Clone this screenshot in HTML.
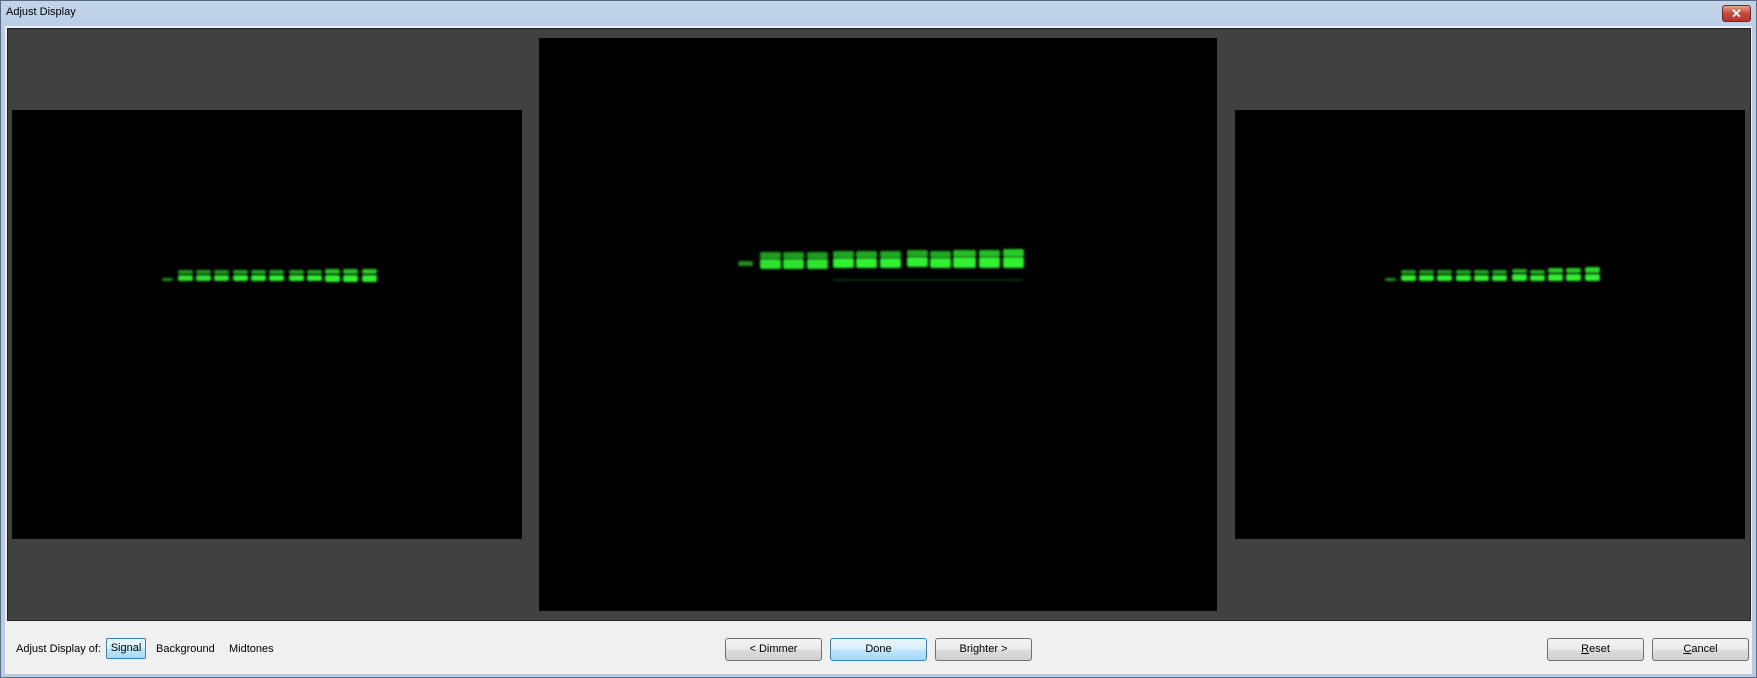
<!DOCTYPE html>
<html><head><meta charset="utf-8"><style>
*{margin:0;padding:0;box-sizing:border-box}
body{width:1757px;height:678px;overflow:hidden;background:#f0f0f0;font-family:"Liberation Sans",sans-serif;position:relative}
.win{position:absolute;left:0;top:0;width:1757px;height:678px;border:1px solid #5a6b80;background:linear-gradient(#c2d4ea,#b8cde5 30px,#b8cde5);}
.title{position:absolute;left:6px;top:6px;font-size:11px;color:#000}
.close{position:absolute;left:1722px;top:5px;width:29px;height:17px;border:1px solid #6d2a22;border-radius:3px;background:linear-gradient(#e7a08f,#c9473a 50%,#b5342a);color:#fff;font-size:13px;font-weight:bold;text-align:center;line-height:15px}
.client{position:absolute;left:5px;top:26px;width:1747px;height:648px;background:#f0f0f0}
.dark{position:absolute;left:7px;top:28px;width:1744px;height:593px;background:#414141;border:1px solid #222}
.img{position:absolute;background:#000;overflow:hidden}
.b{position:absolute;background:#30f030;filter:blur(1px);border-radius:2px}
.lbl{position:absolute;font-size:11px;color:#000;top:643px}
.btn{position:absolute;top:638px;height:23px;border:1px solid #707070;border-radius:3px;background:linear-gradient(#f2f2f2,#ebebeb 50%,#dddddd 50%,#cfcfcf);font-size:11px;text-align:center;line-height:21px;color:#000}
.btn.on{border-color:#3c7fb1;background:linear-gradient(#eaf6fd,#d9f0fc 50%,#bee6fd 50%,#a7d9f5)}
</style></head><body>
<div class="win"></div>
<div class="title">Adjust Display</div>
<div class="close">✕</div>
<div class="client"></div>
<div class="dark"></div>

<div class="img" style="left:12px;top:110px;width:510px;height:429px"></div>
<div class="img" style="left:539px;top:38px;width:678px;height:573px"></div>
<div class="img" style="left:1235px;top:110px;width:510px;height:429px"></div>

<!-- left bands -->
<div class="b" style="left:162px;top:278px;width:11px;height:3px;opacity:.6"></div>
<div class="b" style="left:178px;top:270px;width:15px;height:4px;opacity:.65"></div><div class="b" style="left:178px;top:275px;width:15px;height:6px;opacity:.95"></div>
<div class="b" style="left:196px;top:270px;width:15px;height:4px;opacity:.65"></div><div class="b" style="left:196px;top:275px;width:15px;height:6px;opacity:.95"></div>
<div class="b" style="left:214px;top:270px;width:15px;height:4px;opacity:.65"></div><div class="b" style="left:214px;top:275px;width:15px;height:6px;opacity:.95"></div>
<div class="b" style="left:233px;top:270px;width:15px;height:4px;opacity:.7"></div><div class="b" style="left:233px;top:275px;width:15px;height:6px;opacity:1"></div>
<div class="b" style="left:251px;top:270px;width:15px;height:4px;opacity:.7"></div><div class="b" style="left:251px;top:275px;width:15px;height:6px;opacity:1"></div>
<div class="b" style="left:269px;top:270px;width:15px;height:4px;opacity:.7"></div><div class="b" style="left:269px;top:275px;width:15px;height:6px;opacity:1"></div>
<div class="b" style="left:289px;top:270px;width:15px;height:4px;opacity:.7"></div><div class="b" style="left:289px;top:275px;width:15px;height:6px;opacity:1"></div>
<div class="b" style="left:307px;top:270px;width:15px;height:4px;opacity:.7"></div><div class="b" style="left:307px;top:275px;width:15px;height:6px;opacity:1"></div>
<div class="b" style="left:325px;top:269px;width:15px;height:5px;opacity:.8"></div><div class="b" style="left:325px;top:275px;width:15px;height:7px;opacity:1"></div>
<div class="b" style="left:343px;top:269px;width:15px;height:5px;opacity:.8"></div><div class="b" style="left:343px;top:275px;width:15px;height:7px;opacity:1"></div>
<div class="b" style="left:362px;top:269px;width:15px;height:5px;opacity:.85"></div><div class="b" style="left:362px;top:275px;width:15px;height:7px;opacity:1"></div>

<!-- center bands -->
<div class="b" style="left:738px;top:261px;width:15px;height:5px;opacity:.6"></div>
<div class="b" style="left:760px;top:252px;width:21px;height:7px;opacity:.65"></div><div class="b" style="left:760px;top:259px;width:21px;height:10px;opacity:.95"></div>
<div class="b" style="left:783px;top:252px;width:21px;height:7px;opacity:.65"></div><div class="b" style="left:783px;top:259px;width:21px;height:10px;opacity:.95"></div>
<div class="b" style="left:807px;top:252px;width:21px;height:7px;opacity:.65"></div><div class="b" style="left:807px;top:259px;width:21px;height:10px;opacity:.95"></div>
<div class="b" style="left:833px;top:251px;width:21px;height:7px;opacity:.7"></div><div class="b" style="left:833px;top:258px;width:21px;height:10px;opacity:1"></div>
<div class="b" style="left:856px;top:251px;width:21px;height:7px;opacity:.7"></div><div class="b" style="left:856px;top:258px;width:21px;height:10px;opacity:1"></div>
<div class="b" style="left:880px;top:251px;width:21px;height:7px;opacity:.7"></div><div class="b" style="left:880px;top:258px;width:21px;height:10px;opacity:1"></div>
<div class="b" style="left:907px;top:250px;width:21px;height:7px;opacity:.7"></div><div class="b" style="left:907px;top:257px;width:21px;height:10px;opacity:1"></div>
<div class="b" style="left:930px;top:251px;width:21px;height:7px;opacity:.7"></div><div class="b" style="left:930px;top:258px;width:21px;height:10px;opacity:1"></div>
<div class="b" style="left:953px;top:250px;width:23px;height:7px;opacity:.8"></div><div class="b" style="left:953px;top:257px;width:23px;height:11px;opacity:1"></div>
<div class="b" style="left:979px;top:250px;width:21px;height:7px;opacity:.8"></div><div class="b" style="left:979px;top:257px;width:21px;height:11px;opacity:1"></div>
<div class="b" style="left:1003px;top:249px;width:21px;height:8px;opacity:.85"></div><div class="b" style="left:1003px;top:257px;width:21px;height:11px;opacity:1"></div>
<div class="b" style="left:833px;top:279px;width:190px;height:2px;opacity:.2"></div>

<!-- right bands -->
<div class="b" style="left:1385px;top:278px;width:11px;height:3px;opacity:.6"></div>
<div class="b" style="left:1401px;top:270px;width:15px;height:4px;opacity:.65"></div><div class="b" style="left:1401px;top:275px;width:15px;height:6px;opacity:1"></div>
<div class="b" style="left:1419px;top:270px;width:15px;height:4px;opacity:.65"></div><div class="b" style="left:1419px;top:275px;width:15px;height:6px;opacity:1"></div>
<div class="b" style="left:1437px;top:270px;width:15px;height:4px;opacity:.65"></div><div class="b" style="left:1437px;top:275px;width:15px;height:6px;opacity:1"></div>
<div class="b" style="left:1456px;top:270px;width:15px;height:4px;opacity:.7"></div><div class="b" style="left:1456px;top:275px;width:15px;height:6px;opacity:1"></div>
<div class="b" style="left:1474px;top:270px;width:15px;height:4px;opacity:.7"></div><div class="b" style="left:1474px;top:275px;width:15px;height:6px;opacity:1"></div>
<div class="b" style="left:1492px;top:270px;width:15px;height:4px;opacity:.7"></div><div class="b" style="left:1492px;top:275px;width:15px;height:6px;opacity:1"></div>
<div class="b" style="left:1512px;top:269px;width:15px;height:4px;opacity:.75"></div><div class="b" style="left:1512px;top:274px;width:15px;height:7px;opacity:1"></div>
<div class="b" style="left:1530px;top:270px;width:15px;height:4px;opacity:.75"></div><div class="b" style="left:1530px;top:275px;width:15px;height:6px;opacity:1"></div>
<div class="b" style="left:1548px;top:268px;width:15px;height:5px;opacity:.85"></div><div class="b" style="left:1548px;top:274px;width:15px;height:7px;opacity:1"></div>
<div class="b" style="left:1566px;top:268px;width:15px;height:5px;opacity:.85"></div><div class="b" style="left:1566px;top:274px;width:15px;height:7px;opacity:1"></div>
<div class="b" style="left:1585px;top:267px;width:15px;height:6px;opacity:.9"></div><div class="b" style="left:1585px;top:274px;width:15px;height:7px;opacity:1"></div>

<div class="lbl" style="left:16px">Adjust Display of:</div>
<div class="btn on" style="left:106px;top:638px;width:40px;height:21px;border-radius:2px;line-height:19px">Signal</div>
<div class="lbl" style="left:156px">Background</div>
<div class="lbl" style="left:229px">Midtones</div>

<div class="btn" style="left:725px;width:97px">&lt; Dimmer</div>
<div class="btn on" style="left:830px;width:97px">Done</div>
<div class="btn" style="left:935px;width:97px">Brighter &gt;</div>
<div class="btn" style="left:1547px;width:97px"><u>R</u>eset</div>
<div class="btn" style="left:1652px;width:97px"><u>C</u>ancel</div>
</body></html>
